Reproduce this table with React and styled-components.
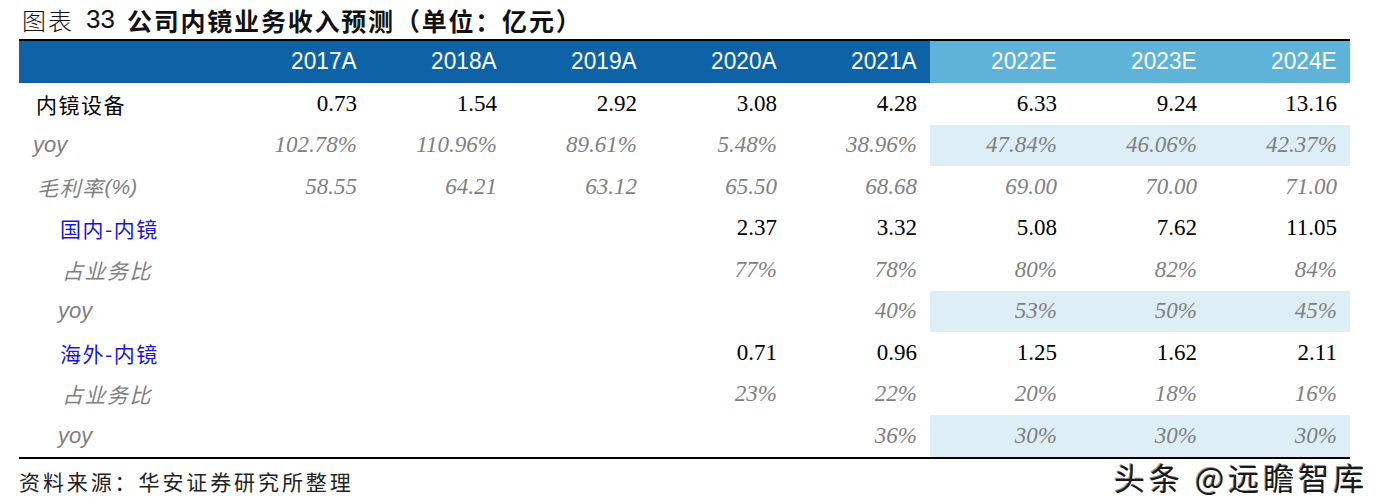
import React from "react";
import styled, { createGlobalStyle, css } from "styled-components";

const Global = createGlobalStyle`
  html, body { margin: 0; padding: 0; background: #fff; }
  body { width: 1384px; height: 504px; overflow: hidden; }
`;

const CJK = `"Noto Sans CJK SC", "Noto Sans", sans-serif`;
const SERIF = `"Liberation Serif", "Noto Sans CJK SC", serif`;
const SANS = `"Liberation Sans", "Noto Sans CJK SC", sans-serif`;

const Page = styled.div`
  position: relative;
  width: 1384px;
  height: 504px;
  padding-left: 19px;
  box-sizing: border-box;
`;

const Title = styled.div`
  height: 39px;
  display: flex;
  align-items: center;
  padding-left: 3px;
  font-family: ${CJK};
  font-size: 24px;
  color: #111;
  white-space: pre;
`;

const TitleLight = styled.span`
  font-weight: 300;
  letter-spacing: 2px;
`;

const TitleNum = styled.span`
  font-family: "Liberation Sans", sans-serif;
  font-size: 26px;
  margin: 0 12px 0 12px;
`;

const TitleBold = styled.span`
  font-weight: 700;
  font-size: 25px;
  letter-spacing: 1.8px;
`;

const Table = styled.div`
  width: 1331px;
  border-top: 2px solid #000;
  border-bottom: 2px solid #000;
`;

const Row = styled.div`
  display: grid;
  grid-template-columns: 211px repeat(8, 140px);
  height: ${(p) => p.$h || 41.5}px;
`;

const HeadCell = styled.div`
  display: flex;
  align-items: center;
  justify-content: flex-end;
  padding-right: 13px;
  background: ${(p) => (p.$est ? "#5fb3d9" : "#0e63a6")};
  color: #fff;
  font-family: ${SANS};
  font-size: 22px;
`;

const HeadText = styled.span`
  display: inline-block;
  transform: scaleX(1.03) scaleY(1.05);
  transform-origin: right center;
`;

const labelKinds = {
  main: css`
    color: #000;
    font-family: ${CJK};
    font-size: 21px;
    letter-spacing: 1.5px;
  `,
  yoy: css`
    color: #7f7f7f;
    font-family: ${SANS};
    font-style: italic;
    font-size: 22px;
  `,
  gray: css`
    color: #7f7f7f;
    font-family: ${CJK};
    font-style: italic;
    font-size: 21px;
    letter-spacing: 1.5px;
  `,
  blue: css`
    color: #1515dd;
    font-family: ${CJK};
    font-size: 21px;
    letter-spacing: 1.5px;
  `,
};

const Label = styled.div`
  display: flex;
  align-items: center;
  padding-left: ${(p) => p.$indent}px;
  white-space: nowrap;
  ${(p) => labelKinds[p.$kind]}
`;

const LabelGrayPct = styled.span`
  font-family: ${SANS};
  letter-spacing: 0;
`;

const Cell = styled.div`
  display: flex;
  align-items: center;
  justify-content: flex-end;
  padding-right: 13px;
  font-family: ${SERIF};
  font-size: 23px;
  background: ${(p) => (p.$shade ? "#ddeef6" : "transparent")};
  color: ${(p) => (p.$muted ? "#7f7f7f" : "#000")};
  font-style: ${(p) => (p.$muted ? "italic" : "normal")};
`;

const Footer = styled.div`
  height: 44px;
  display: flex;
  align-items: center;
  font-family: ${CJK};
  font-size: 21px;
  letter-spacing: 2.9px;
  color: #222;
`;

const Watermark = styled.div`
  position: absolute;
  left: 1114px;
  top: 454px;
  font-family: ${CJK};
  font-size: 31px;
  color: #1a1a1a;
  letter-spacing: 4px;
  text-shadow: 2px 2px 0 #fff, -1px -1px 0 #9a9a9a;
  white-space: pre;
`;

const years = ["2017A", "2018A", "2019A", "2020A", "2021A", "2022E", "2023E", "2024E"];

const rows = [
  { label: "内镜设备", kind: "main", indent: 17, muted: false, shade: false,
    vals: ["0.73", "1.54", "2.92", "3.08", "4.28", "6.33", "9.24", "13.16"] },
  { label: "yoy", kind: "yoy", indent: 14, muted: true, shade: true,
    vals: ["102.78%", "110.96%", "89.61%", "5.48%", "38.96%", "47.84%", "46.06%", "42.37%"] },
  { label: "毛利率", pct: true, kind: "gray", indent: 18, muted: true, shade: false,
    vals: ["58.55", "64.21", "63.12", "65.50", "68.68", "69.00", "70.00", "71.00"] },
  { label: "国内-内镜", kind: "blue", indent: 41, muted: false, shade: false,
    vals: ["", "", "", "2.37", "3.32", "5.08", "7.62", "11.05"] },
  { label: "占业务比", kind: "gray", indent: 43, muted: true, shade: false,
    vals: ["", "", "", "77%", "78%", "80%", "82%", "84%"] },
  { label: "yoy", kind: "yoy", indent: 39, muted: true, shade: true,
    vals: ["", "", "", "", "40%", "53%", "50%", "45%"] },
  { label: "海外-内镜", kind: "blue", indent: 41, muted: false, shade: false,
    vals: ["", "", "", "0.71", "0.96", "1.25", "1.62", "2.11"] },
  { label: "占业务比", kind: "gray", indent: 43, muted: true, shade: false,
    vals: ["", "", "", "23%", "22%", "20%", "18%", "16%"] },
  { label: "yoy", kind: "yoy", indent: 39, muted: true, shade: true,
    vals: ["", "", "", "", "36%", "30%", "30%", "30%"] },
];

export default function App() {
  return (
    <>
      <Global />
      <Page>
        <Title>
          <TitleLight>图表</TitleLight>
          <TitleNum>33</TitleNum>
          <TitleBold>公司内镜业务收入预测（单位：亿元）</TitleBold>
        </Title>
        <Table>
          <Row $h={42}>
            <HeadCell />
            {years.map((y, i) => (
              <HeadCell key={y} $est={i >= 5}>
                <HeadText>{y}</HeadText>
              </HeadCell>
            ))}
          </Row>
          {rows.map((r, ri) => (
            <Row key={ri}>
              <Label $kind={r.kind} $indent={r.indent}>
                {r.label}
                {r.pct && <LabelGrayPct>(%)</LabelGrayPct>}
              </Label>
              {r.vals.map((v, i) => (
                <Cell key={i} $muted={r.muted} $shade={r.shade && i >= 5}>
                  {v}
                </Cell>
              ))}
            </Row>
          ))}
        </Table>
        <Footer>资料来源：华安证券研究所整理</Footer>
        <Watermark>头条 @远瞻智库</Watermark>
      </Page>
    </>
  );
}
